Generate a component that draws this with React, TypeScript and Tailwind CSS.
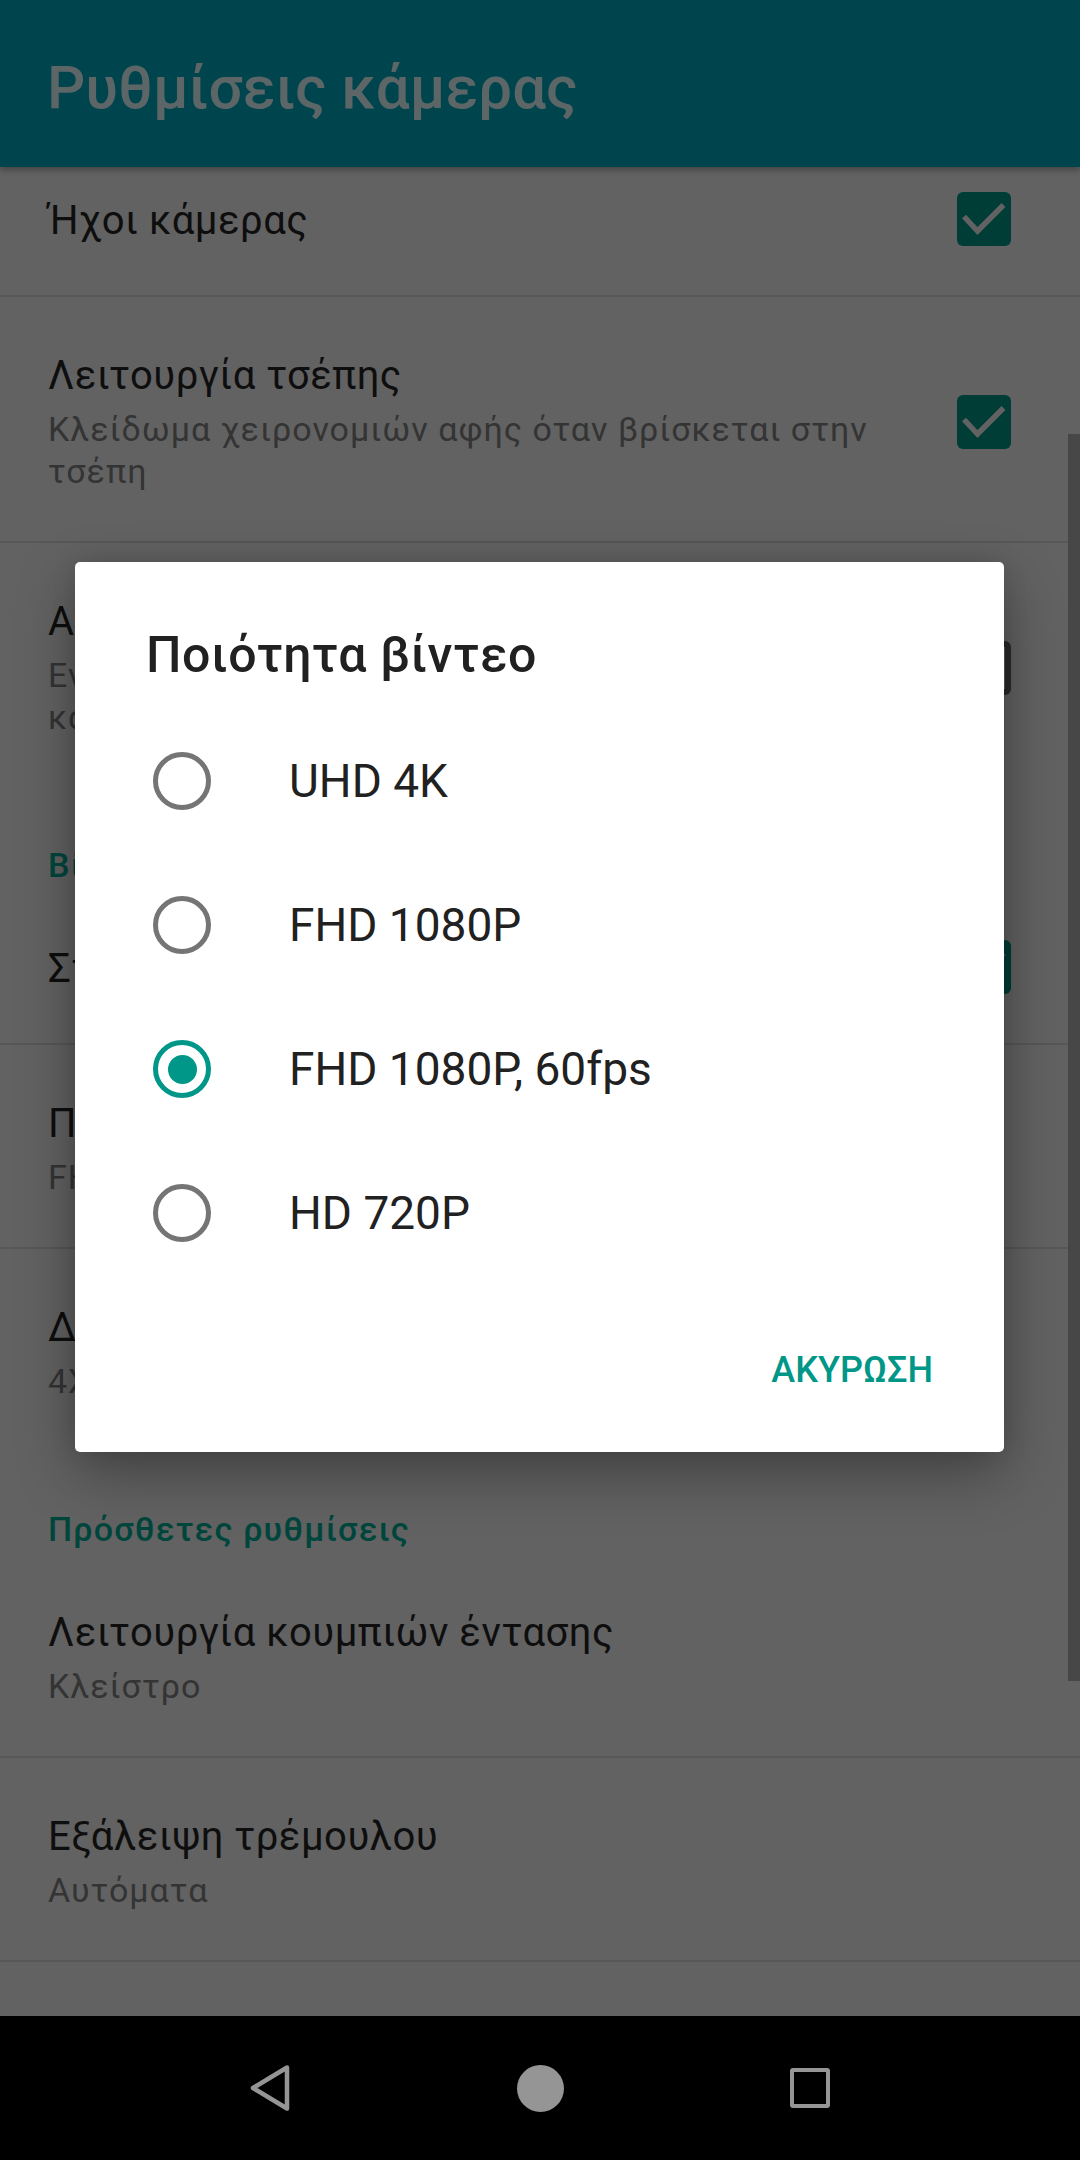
import React from "react";

type Setting = {
  title: string;
  summary?: React.ReactNode;
  check?: "on" | "off";
  divider?: boolean;
};

const topRows: Setting[] = [
  { title: "Ήχοι κάμερας", check: "on", divider: true },
  {
    title: "Λειτουργία τσέπης",
    summary: "Κλείδωμα χειρονομιών αφής όταν βρίσκεται στην τσέπη",
    check: "on",
    divider: true,
  },
  {
    title: "Αποθήκευση τοποθεσίας",
    summary: (
      <>
        Ενσωμάτωση τοποθεσίας σε φωτογραφίες
        <br />
        και βίντεο
      </>
    ),
    check: "off",
  },
];

const videoRows: Setting[] = [
  { title: "Σταθεροποίηση βίντεο", check: "on", divider: true },
  { title: "Ποιότητα βίντεο", summary: "FHD 1080P, 60fps", divider: true },
  { title: "Διάστημα time lapse", summary: "4X" },
];

const extraRows: Setting[] = [
  { title: "Λειτουργία κουμπιών έντασης", summary: "Κλείστρο", divider: true },
  { title: "Εξάλειψη τρέμουλου", summary: "Αυτόματα", divider: true },
];

const qualities = ["UHD 4K", "FHD 1080P", "FHD 1080P, 60fps", "HD 720P"];

function CheckBox({ on }: { on: boolean }) {
  if (!on) {
    return <span className="block w-[54px] h-[54px] shrink-0 rounded-[6px] border-[6px] border-[#2b2b2b]" />;
  }
  return (
    <span className="flex w-[54px] h-[54px] shrink-0 items-center justify-center rounded-[6px] bg-[#003d36]">
      <svg width="54" height="54" viewBox="0 0 54 54">
        <path d="M7 24.5 L20.5 39 L46.5 13" fill="none" stroke="#626262" strokeWidth="5.5" />
      </svg>
    </span>
  );
}

function SettingRow({ s }: { s: Setting }) {
  const size = s.summary
    ? "pt-[54px] pb-[49px]"
    : s.divider
    ? "h-[155px]"
    : "h-[153px]";
  return (
    <div
      className={`flex items-center pl-[48px] pr-[69px] ${size} ${
        s.divider ? "border-b-2 border-[#575757]" : ""
      }`}
    >
      <div className={`flex-1 min-w-0 mr-[37px] ${s.summary ? "" : "pt-[4px]"}`}>
        <div className="text-[40px] leading-[50px] tracking-[0.5px] text-[#0e0e0e]">{s.title}</div>
        {s.summary && (
          <div className="mt-[7px] text-[34px] leading-[42px] tracking-[1px] text-[#343434]">{s.summary}</div>
        )}
      </div>
      {s.check && <CheckBox on={s.check === "on"} />}
    </div>
  );
}

function Category({ label }: { label: string }) {
  return (
    <div className="h-[103px] pt-[57px] pl-[48px] text-[34px] leading-[42px] tracking-[1.2px] font-medium text-[#00463d]">
      {label}
    </div>
  );
}

function Radio({ checked }: { checked: boolean }) {
  return (
    <span
      className={`flex w-[58px] h-[58px] shrink-0 items-center justify-center rounded-full border-[5px] ${
        checked ? "border-[#009688]" : "border-[#757575]"
      }`}
    >
      {checked && <span className="block w-[29px] h-[29px] rounded-full bg-[#009688]" />}
    </span>
  );
}

export default function App() {
  const selected = 2;

  return (
    <div className="relative flex flex-col w-[1080px] h-[2160px] overflow-hidden bg-[#626262] font-['Roboto','Noto_Sans',sans-serif]">
      <header className="relative z-10 h-[167px] shrink-0 bg-[#00454e] pl-[47px] pt-[53px] shadow-[0_3px_6px_rgba(0,0,0,0.3)]">
        <h1 className="text-[60px] leading-[70px] font-medium text-[#5c6667]">Ρυθμίσεις κάμερας</h1>
      </header>

      <main className="flex-1 overflow-hidden">
        <div className="mt-[-25px]">
          {topRows.map((s) => (
            <SettingRow key={s.title} s={s} />
          ))}
          <Category label="Βίντεο" />
          {videoRows.map((s) => (
            <SettingRow key={s.title} s={s} />
          ))}
          <Category label="Πρόσθετες ρυθμίσεις" />
          {extraRows.map((s) => (
            <SettingRow key={s.title} s={s} />
          ))}
        </div>
      </main>

      <nav className="flex h-[144px] shrink-0 items-center bg-black px-[135px]">
        <div className="flex flex-1 justify-center">
          <svg width="40" height="46" viewBox="0 0 40 46">
            <path d="M37 2.5 L3 23 L37 43.5 Z" fill="none" stroke="#959595" strokeWidth="4.5" strokeLinejoin="round" />
          </svg>
        </div>
        <div className="flex flex-1 justify-center">
          <span className="block w-[47px] h-[47px] rounded-full bg-[#959595]" />
        </div>
        <div className="flex flex-1 justify-center">
          <span className="block w-[40px] h-[40px] rounded-[3px] border-[4px] border-[#959595]" />
        </div>
      </nav>

      {/* scrollbar */}
      <div className="absolute right-0 top-[434px] w-[12px] h-[1247px] bg-[#474747]" />

      {/* dialog */}
      <div className="absolute left-[75px] top-[562px] flex flex-col w-[929px] h-[890px] rounded-[5px] bg-white shadow-[0_22px_60px_rgba(0,0,0,0.32),0_0_24px_rgba(0,0,0,0.12)]">
        <h2 className="pt-[65px] pl-[71px] text-[50px] leading-[56px] tracking-[0.6px] font-medium text-[#212121]">
          Ποιότητα βίντεο
        </h2>
        <ul className="mt-[26px]">
          {qualities.map((q, i) => (
            <li key={q} className="flex h-[144px] items-center pl-[78px]">
              <Radio checked={i === selected} />
              <span className="ml-[78px] text-[46px] leading-[56px] text-[#212121]">{q}</span>
            </li>
          ))}
        </ul>
        <div className="mt-[63px] flex justify-end pr-[71px]">
          <button className="text-[36px] leading-[44px] font-medium uppercase text-[#009688]">Ακυρωση</button>
        </div>
      </div>
    </div>
  );
}
